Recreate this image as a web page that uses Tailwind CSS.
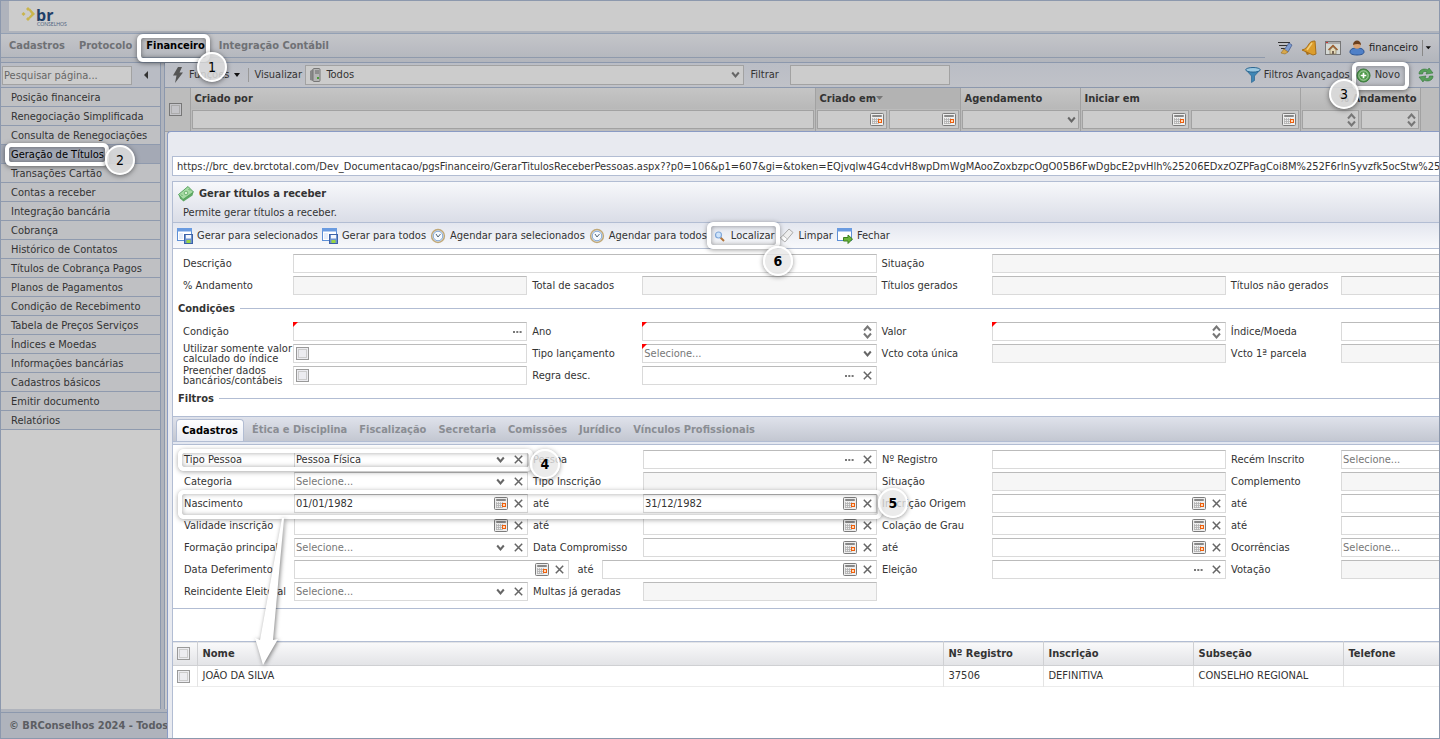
<!DOCTYPE html>
<html lang="pt-BR">
<head>
  <meta charset="UTF-8" />
  <meta name="viewport" content="width=device-width, initial-scale=1.0"/>
  <title>BRConselhos - Gerar títulos a receber</title>
  <script src="https://cdn.jsdelivr.net/npm/@tailwindcss/browser@4"></script>
</head>
<body class="font-['Tahoma','DejaVu_Sans_Condensed','DejaVu_Sans',sans-serif] text-[11px] leading-[14px] text-[#333]">

  <!-- icons -->
  <svg class="hidden">
    <symbol id="i-cal" viewBox="0 0 14 13"><rect x=".5" y=".5" width="13" height="12" rx="1" fill="#eee" stroke="#7c7c7c"/><path d="M2.500 2.500h9v1h-9z" fill="#bbb" stroke="#888"/><path d="M2.500 5v6M4.500 5v6M6.500 5v6M8.500 5v6M2 6.500h8M2 8.500h8M2 10.500h6" stroke="#b0b0b0" stroke-width=".8"/><path d="M8 6h4v4H8z" fill="#ee5f0c"/><path d="M9 7h2v2H9z" fill="#ffd9b8"/></symbol>
    <symbol id="i-x" viewBox="0 0 9 9"><path d="M.8.8l7.400 7.400M8.200.8L.8 8.200" stroke="#666" stroke-width="1.500" fill="none"/></symbol>
    <symbol id="i-v" viewBox="0 0 9 9"><path d="M1.200 2.500l3.300 4 3.300-4" stroke="#666" stroke-width="2" fill="none"/></symbol>
    <symbol id="i-dots" viewBox="0 0 9 9"><path d="M0 4h2v2H0zM3.300 4h2v2h-2zM6.600 4h2v2h-2z" fill="#777"/></symbol>
    <symbol id="i-spin" viewBox="0 0 9 14"><path d="M1 5.500l3.500-4 3.500 4M1 8.500l3.500 4 3.500-4" stroke="#777" stroke-width="2" fill="none"/></symbol>
    <symbol id="i-save" viewBox="0 0 16 16"><rect x=".5" y=".5" width="14" height="12" fill="#fff" stroke="#5d8fd6"/><path d="M0 0h15v3.500H0z" fill="#6a9be0"/><path d="M2 5h4v6H2z" fill="#e6eefb"/><rect x="7.500" y="6.500" width="8" height="9" fill="#6f94cf" stroke="#3c62a8"/><path d="M9 7h5v3.500H9z" fill="#f4f7fd"/><path d="M9.500 12h4v3h-4z" fill="#9bd640"/></symbol>
    <symbol id="i-clock" viewBox="0 0 16 16"><circle cx="8" cy="8" r="6.400" fill="#eaf3fc" stroke="#c0a878" stroke-width="1.500"/><circle cx="8" cy="8" r="4.800" fill="#f6fbff" stroke="#7fa4d4"/><path d="M6 6l2 3 2.500-3" fill="none" stroke="#567" stroke-width="1"/></symbol>
    <symbol id="i-find" viewBox="0 0 16 16"><path d="M9.500 9.500l3.500 3.500" stroke="#b5763c" stroke-width="2"/><circle cx="7.500" cy="7" r="3" fill="#cfe4fb" stroke="#82a9db" stroke-width="1.200"/></symbol>
    <symbol id="i-erase" viewBox="0 0 16 16"><path d="M1.500 10L10 1l4 3.500L6 14z" fill="#eee" stroke="#aaa"/><path d="M1.500 10l2.500-2.700L8.300 11 6 14z" fill="#fff" stroke="#aaa" stroke-width=".7"/></symbol>
    <symbol id="i-exit" viewBox="0 0 16 16"><rect x=".5" y=".5" width="14" height="12" fill="#fff" stroke="#5d8fd6"/><path d="M0 0h15v3.500H0z" fill="#6a9be0"/><path d="M6.500 9.500H11V7l4.500 4-4.500 4.500V13H6.500z" fill="#6bb53c" stroke="#3c8020"/></symbol>
  </svg>

  <div class="relative flex flex-col min-h-screen overflow-hidden bg-[#afb3bc] border border-[#8c98ad]">

    <!-- logo -->
    <header class="flex h-[30px] ml-2 pl-3 bg-[#cccccc]">
      <svg class="w-[60px] h-[30px]" viewBox="0 0 60 30" role="img" aria-label="br Conselhos">
        <g fill="#c9b44c"><path d="M2.500 11l2 2-2 2-2-2z"/><path d="M7 6l2 2-2 2-2-2z"/><path d="M7 16l2 2-2 2-2-2z"/><path d="M7.500 9l1.500-1.500L14 13l-5.200 5-1.500-1.500L10.500 13z"/></g>
        <text x="15" y="20" font-family="Open Sans" font-size="16" font-weight="700" fill="#1f3f68">br</text>
        <text x="16" y="25" font-family="Lato" font-size="5" fill="#4f6480">CONSELHOS</text>
      </svg>
    </header>

    <!-- menu -->
    <nav class="relative flex items-stretch h-[29px] mt-[2px] border-t border-[#93a0b4] bg-linear-to-b from-[#c4c5c9] to-[#b2b5bc] font-bold text-[#6f7175]">
      <div class="flex items-center gap-[14px] grow pl-2 mb-1 border-b border-[#8f9aac] mr-2 text-[11px]">
        <a href="#">Cadastros</a>
        <a href="#">Protocolo</a>
        <a href="#" class="text-black">Financeiro</a>
        <a href="#">Integração Contábil</a>
      </div>
      <div class="flex items-center gap-2 pr-2 pl-1 font-normal text-[#222]">
        <svg class="size-4" viewBox="0 0 16 16"><path d="M1 2.500h12M2 5.500h10M4 8.500h5" stroke="#333" stroke-width="1.200"/><path d="M7 10l5-7 3 2-4 7z" fill="#7c9bd0" stroke="#4a5f90" stroke-width=".8"/><path d="M4 13l3-4 4 3-3 2z" fill="#d8a84c" stroke="#9a6f20" stroke-width=".6"/></svg>
        <svg class="size-4" viewBox="0 0 16 16"><path d="M14 1l1 13-3 1L1 10c4-1 5-3 7-6 1-2 3-3 6-3z" fill="#dc9d2c" stroke="#a8701a"/><path d="M11 3l-5 7" stroke="#f2cf7c" stroke-width="1.500"/><path d="M4 11l5 3-3 1z" fill="#a8701a"/></svg>
        <svg class="size-4" viewBox="0 0 16 16"><rect x=".5" y="1.500" width="15" height="13" fill="#d5d9d5" stroke="#777"/><path d="M1 2h14v2H1z" fill="#aaa"/><path d="M1 2h2v1H1z" fill="#c33"/><path d="M3.500 10L8 5.500l4.500 4.500" fill="none" stroke="#9a5a28" stroke-width="1.500"/><path d="M5 10l3-3 3 3v4H5z" fill="#e4d9b8" stroke="#8a7d5e" stroke-width=".7"/><path d="M7 11h2v3H7z" fill="#765"/></svg>
        <button class="flex items-center gap-1">
          <svg class="size-4" viewBox="0 0 16 16"><path d="M1 12c0-3 3-4 7-4s7 1 7 4c0 2-3 3-7 3s-7-1-7-3z" fill="#4f80c8" stroke="#2c5594"/><circle cx="8" cy="5" r="3.700" fill="#d9a273"/><path d="M4 5c0-6 8-6 8 0-2-1.500-5-1.500-8 0z" fill="#6b3f1d"/></svg>
          <span>financeiro</span>
          <svg class="w-[9px] h-4 border-l border-[#888]" viewBox="0 0 9 16"><path d="M3 6h6l-3 3.500z" fill="#111"/></svg>
        </button>
      </div>
      <div class="absolute left-[136px] top-0 w-[73px] h-[28px] rounded-md border-4 border-white shadow-[0_1px_5px_rgba(0,0,0,.5),inset_0_0_5px_rgba(0,0,0,.45)]"></div>
    </nav>

    <div class="flex grow gap-[3px] border-t border-[#8c98ad]">
      <!-- side menu -->
      <aside class="w-40 shrink-0 border-r border-[#8c98ad] bg-[#cccccc]">
        <div class="flex items-center h-[25px] pl-px border-b border-[#8c98ad] bg-[#b9bcc4]">
          <input aria-label="Pesquisar página" placeholder="Pesquisar página..." class="w-[131px] h-[19px] px-px border border-[#a2a2a2] bg-[#cccccc] placeholder:text-[#666]">
          <button class="px-3" aria-label="Recolher"><svg class="w-1 h-2" viewBox="0 0 4 8"><path d="M4 0v8L0 4z" fill="#333"/></svg></button>
        </div>
        <ul id="menu" class="relative"></ul>
      </aside>

      <!-- list behind the window -->
      <main class="grow min-w-0 border-l border-[#8c98ad] bg-[#cccccc]">
        <div class="relative flex items-center h-[25px] pl-[7px] pr-[5px] border-b border-[#8c98ad] bg-linear-to-b from-[#babdc5] to-[#c0c2c8]">
          <button class="flex items-center gap-[5px]">
            <svg class="w-3 h-4" viewBox="0 0 12 16"><path d="M6 0h4L7.500 5.500H11L3 16l1.500-7.500H1z" fill="#555"/></svg>Funções
            <svg class="w-[6px] h-2" viewBox="0 0 6 8"><path d="M0 2h6L3 6z" fill="#111"/></svg>
          </button>
          <div class="w-px h-[14px] ml-2 mr-[5px] bg-[#999]"></div>
          <label for="vis" class="w-[51px]">Visualizar</label>
          <div class="relative w-[439px] h-[20px]">
            <select id="vis" class="w-full h-full pl-5 appearance-none border border-[#a2a2a2] bg-[#cccccc]"><option>Todos</option></select>
            <svg class="absolute left-1 top-[3px] w-[13px] h-[14px]" viewBox="0 0 13 14"><path d="M1 3l3-2v12l-3-1z" fill="#888"/><rect x="4" y=".5" width="7" height="13" rx="1" fill="#b5b5b5" stroke="#777"/><path d="M6 3h4M6 5h4" stroke="#666"/><path d="M8 9h2v2H8z" fill="#4b9a38"/></svg>
            <svg class="absolute right-1 top-[5px] size-[9px] pointer-events-none"><use href="#i-v"/></svg>
          </div>
          <label for="filtrar" class="w-[40px] ml-[6px]">Filtrar</label>
          <input id="filtrar" class="w-40 h-[20px] px-1 border border-[#a2a2a2] bg-[#cccccc]">
          <div class="flex items-center gap-[6px] ml-auto">
            <button class="flex items-center gap-[3px]">
              <svg class="size-4" viewBox="0 0 16 16"><path d="M1 3l5.500 6v6.500l3-2V9L15 3z" fill="#3f87b5" stroke="#2b6690" stroke-width=".7"/><ellipse cx="8" cy="2.800" rx="7.300" ry="2.300" fill="#9cc8e0" stroke="#2b6690"/></svg>Filtros Avançados
            </button>
            <button class="flex items-center gap-1">
              <svg class="size-[15px]" viewBox="0 0 16 16"><circle cx="8" cy="8" r="7" fill="#4f9a4a" stroke="#37783a"/><circle cx="8" cy="8" r="5" fill="none" stroke="#b7d6b4"/><path d="M8 5v6M5 8h6" stroke="#fff" stroke-width="1.800"/></svg>Novo
            </button>
            <button aria-label="Atualizar" class="ml-3"><svg class="size-4" viewBox="0 0 16 16"><path d="M1 7c0-5 6-6 9-4l1-2 4 5-7 1 1-2C7 4 5 4 4.500 7zM15 9c0 5-6 6-9 4l-1 2-4-5 7-1-1 2c2 1 4 1 4.500-2z" fill="#58a05a" stroke="#34763a" stroke-width=".6"/></svg></button>
          </div>
          <div class="absolute right-[30px] -top-px w-[57px] h-[28px] rounded-md border-4 border-white shadow-[0_1px_5px_rgba(0,0,0,.5),inset_0_0_5px_rgba(0,0,0,.35)]"></div>
        </div>
        <table class="w-full table-fixed border-collapse text-left bg-[#bcbcbc]">
          <colgroup><col class="w-[25px]"><col><col class="w-[145px]"><col class="w-[120px]"><col class="w-[220px]"><col class="w-[120px]"><col class="w-[19px]"></colgroup>
          <tr class="h-[21px] bg-linear-to-b from-[#c5c5c5] to-[#b8b8b8]">
            <th rowspan="2" class="pl-1 bg-[#bcbcbc]"><input type="checkbox" aria-label="Selecionar" class="block size-[13px] appearance-none border border-[#777] bg-[#c4c4c8] outline outline-offset-[-3px] outline-[#ababab]"></th>
            <th class="pl-1 border-l border-[#a2a2a2]">Criado por</th>
            <th class="pl-1 border-l border-[#a2a2a2] bg-[#b3b3b3]">Criado em<svg class="inline w-[7px] h-1 mb-[2px]" viewBox="0 0 7 4"><path d="M0 0h7L3.500 4z" fill="#777"/></svg></th>
            <th class="pl-1 border-l border-[#a2a2a2]">Agendamento</th>
            <th class="pl-1 border-l border-[#a2a2a2]">Iniciar em</th>
            <th class="pr-[3px] border-l border-[#a2a2a2] text-right">% Andamento</th>
            <th rowspan="2" class="border-l border-[#a2a2a2] bg-[#bcbcbc]"></th>
          </tr>
          <tr id="filters" class="h-[22px] border-b border-[#a2a2a2]"></tr>
        </table>
      </main>
    </div>

    <footer class="flex items-center h-[26px] pl-2 mt-[3px] border-t border-[#8c98ad] font-bold text-[#5c5e63]">© BRConselhos 2024 - Todos os direitos reservados</footer>

    <!-- window -->
    <section class="absolute left-[166px] top-[130px] -right-[151px] -bottom-px pl-[4px] pt-6 flex flex-col border-l border-t border-[#8a9bc4] rounded-tl bg-[#e8eaf0]">
      <input aria-label="Endereço" value="https://brc_dev.brctotal.com/Dev_Documentacao/pgsFinanceiro/GerarTitulosReceberPessoas.aspx??p0=106&amp;p1=607&amp;gi=&amp;token=EQjvqlw4G4cdvH8wpDmWgMAooZoxbzpcOgO05B6FwDgbcE2pvHlh%25206EDxzOZPFagCoi8M%252F6rlnSyvzfk5ocStw%253D%253D" class="w-full h-5 shrink-0 px-1 border border-[#b2bdd3] bg-white">
      <div class="grow mt-[5px] border-l border-t border-[#b2bdd3] bg-white">
        <div class="h-[41px] pt-1 pl-[5px] bg-linear-to-b from-[#f7f8fb] to-[#dadde7] border-b border-[#b2bdd3]">
          <h1 class="flex items-center gap-[5px] h-4 font-bold">
            <svg class="size-4" viewBox="0 0 16 16"><path d="M.5 8.500L10 .5 15.500 6l-1 3.500-9 6-3.500-3z" fill="#5fa964"/><path d="M.5 8.500L10 .5 15.500 6 5 13.500z" fill="#a6dba4" stroke="#4c9a55" stroke-width=".8"/><circle cx="8" cy="7" r="1.800" fill="#d9f2d4" stroke="#4f9e55" stroke-width=".7"/><path d="M3 8.500l1.500 1.500M10.500 3L12 4.500" stroke="#5fa964"/></svg>
            Gerar títulos a receber
          </h1>
          <p class="mt-1 pl-[5px]">Permite gerar títulos a receber.</p>
        </div>
        <div class="relative flex items-center gap-1 h-[26px] pl-1 bg-linear-to-b from-[#e3e6ef] to-[#f8f9fb] border-b border-[#b2bdd3]">
          <button class="flex items-center gap-1"><svg class="size-4"><use href="#i-save"/></svg>Gerar para selecionados</button>
          <button class="flex items-center gap-1"><svg class="size-4"><use href="#i-save"/></svg>Gerar para todos</button>
          <button class="flex items-center gap-1"><svg class="size-4"><use href="#i-clock"/></svg>Agendar para selecionados</button>
          <button class="flex items-center gap-1"><svg class="size-4"><use href="#i-clock"/></svg>Agendar para todos</button>
          <button class="relative flex items-center gap-1"><svg class="size-4"><use href="#i-find"/></svg>Localizar
            <span class="absolute -left-1 -top-[6px] -right-[5px] h-[27px] rounded-md border-4 border-white shadow-[0_1px_5px_rgba(0,0,0,.4),inset_0_0_5px_rgba(0,0,0,.4)]"></span>
          </button>
          <button class="flex items-center gap-1"><svg class="size-4"><use href="#i-erase"/></svg>Limpar</button>
          <button class="flex items-center gap-1"><svg class="size-4"><use href="#i-exit"/></svg>Fechar</button>
        </div>

        <div id="geral" class="grid grid-cols-[110px_1fr_110px_1fr_110px_1fr_110px_1fr] gap-y-[3px] pt-[5px] px-[10px]"></div>
        <h2 class="flex items-center gap-[5px] h-[27px] pl-[5px] font-bold after:grow after:h-px after:bg-[#b2bdd3]">Condições</h2>
        <div id="condicoes" class="grid grid-cols-[110px_1fr_110px_1fr_110px_1fr_110px_1fr] gap-y-[3px] px-[10px]"></div>
        <h2 class="flex items-center gap-[5px] h-[27px] pl-[5px] font-bold after:grow after:h-px after:bg-[#b2bdd3]">Filtros</h2>

        <div class="mt-1 border-y border-[#b2bdd3]">
          <div class="flex items-end gap-3 h-[25px] pl-[3px] bg-linear-to-b from-[#dfe2eb] to-[#c3c7d1] border-b border-[#b2bdd3] font-bold text-[#8a8d93]">
            <button class="h-[22px] px-[5px] -mr-1 rounded-t border border-b-0 border-[#b2bdd3] bg-linear-to-b from-white to-[#e8ebf3] text-black">Cadastros</button>
            <button class="h-[22px]">Ética e Disciplina</button>
            <button class="h-[22px]">Fiscalização</button>
            <button class="h-[22px]">Secretaria</button>
            <button class="h-[22px]">Comissões</button>
            <button class="h-[22px]">Jurídico</button>
            <button class="h-[22px]">Vínculos Profissionais</button>
          </div>
          <div class="h-[3px] bg-[#e3e7f0] border-b border-[#b2bdd3]"></div>
          <div id="filtros" class="grid grid-cols-[110px_1fr_110px_1fr_110px_1fr_110px_1fr] gap-y-[3px] pt-[5px] pb-[7px] pl-[11px] pr-[10px]"></div>
        </div>

        <table class="w-full table-fixed mt-[32px] border-collapse text-left">
          <colgroup><col class="w-6"><col><col class="w-[100px]"><col class="w-[150px]"><col class="w-[150px]"><col class="w-[247px]"></colgroup>
          <tr class="h-6 bg-linear-to-b from-[#f9f9fa] to-[#e3e4e7] border-t border-t-[#b2bdd3] border-b border-b-[#cfd0d3]">
            <th class="pl-1"><input type="checkbox" aria-label="Selecionar todos" class="block size-[13px] appearance-none border border-[#999] bg-[#ececf0] outline outline-offset-[-3px] outline-[#ccc]"></th>
            <th class="pl-[5px] border-l border-[#cfd0d3]">Nome</th>
            <th class="pl-[5px] border-l border-[#cfd0d3]">Nº Registro</th>
            <th class="pl-[5px] border-l border-[#cfd0d3]">Inscrição</th>
            <th class="pl-[5px] border-l border-[#cfd0d3]">Subseção</th>
            <th class="pl-[5px] border-l border-[#cfd0d3]">Telefone</th>
          </tr>
          <tr class="h-[21px] border-b border-[#ececec]">
            <td class="pl-1"><input type="checkbox" aria-label="Selecionar João da Silva" class="block size-[13px] appearance-none border border-[#999] bg-[#ececf0] outline outline-offset-[-3px] outline-[#ccc]"></td>
            <td class="pl-[5px] border-l border-[#e4e4e4]">JOÃO DA SILVA</td>
            <td class="pl-[5px] border-l border-[#e4e4e4]">37506</td>
            <td class="pl-[5px] border-l border-[#e4e4e4]">DEFINITIVA</td>
            <td class="pl-[5px] border-l border-[#e4e4e4]">CONSELHO REGIONAL</td>
            <td class="pl-[5px] border-l border-[#e4e4e4]"></td>
          </tr>
        </table>
      </div>

      <!-- frames and arrow over the filters -->
      <div class="absolute left-[10px] top-[317px] w-[355px] h-[22px] rounded-md border-4 border-white shadow-[0_1px_5px_rgba(0,0,0,.35),inset_0_0_5px_rgba(0,0,0,.35)]"></div>
      <div class="absolute left-[10px] top-[358px] w-[704px] h-[29px] rounded-md border-4 border-white shadow-[0_1px_5px_rgba(0,0,0,.35),inset_0_0_5px_rgba(0,0,0,.35)]"></div>
      <svg class="absolute left-[81px] top-[386px] w-10 h-[155px] drop-shadow-[1px_1px_2px_rgba(0,0,0,.5)]" viewBox="0 0 40 155"><path d="M33 0h2L24 122l5-1-15 26L6 120l5 2z" fill="#fff"/></svg>
    </section>

    <!-- step numbers -->
    <div class="absolute left-[196px] top-[51px] size-[30px] grid place-items-center rounded-full border-2 border-white bg-[#dcdcdc]/85 shadow-[0_1px_5px_rgba(0,0,0,.5)] text-[14px] text-black">1</div>
    <div class="absolute left-[104px] top-[144px] size-[30px] grid place-items-center rounded-full border-2 border-white bg-[#dcdcdc]/85 shadow-[0_1px_5px_rgba(0,0,0,.5)] text-[14px] text-black">2</div>
    <div class="absolute right-[80px] top-[78px] size-[30px] grid place-items-center rounded-full border-2 border-white bg-[#dcdcdc]/85 shadow-[0_1px_5px_rgba(0,0,0,.5)] text-[14px] text-black">3</div>
    <div class="absolute left-[529px] top-[448px] size-[30px] grid place-items-center rounded-full border-2 border-white bg-[#e6e6e6]/80 shadow-[0_1px_5px_rgba(0,0,0,.4)] text-[14px] font-bold text-black">4</div>
    <div class="absolute left-[877px] top-[487px] size-[30px] grid place-items-center rounded-full border-2 border-white bg-[#e6e6e6]/80 shadow-[0_1px_5px_rgba(0,0,0,.4)] text-[14px] font-bold text-black">5</div>
    <div class="absolute left-[762px] top-[245px] size-[30px] grid place-items-center rounded-full border-2 border-white bg-[#e6e6e6]/80 shadow-[0_1px_5px_rgba(0,0,0,.4)] text-[14px] font-bold text-black">6</div>
  </div>

  <script>
    const menu = [
      "Posição financeira", "Renegociação Simplificada", "Consulta de Renegociações", "Geração de Títulos",
      "Transações Cartão", "Contas a receber", "Integração bancária", "Cobrança", "Histórico de Contatos",
      "Títulos de Cobrança Pagos", "Planos de Pagamentos", "Condição de Recebimento", "Tabela de Preços Serviços",
      "Índices e Moedas", "Informações bancárias", "Cadastros básicos", "Emitir documento", "Relatórios"
    ];
    document.getElementById("menu").innerHTML = menu.map((m, i) => i === 3
      ? `<li class="relative h-[19px] pl-[10px] pt-[3px] border-b border-[#8f9aae] bg-[#a4a9b5] text-black"><a href="#">${m}</a>
          <span class="absolute left-1 -top-[2px] w-[104px] h-[23px] rounded-md border-4 border-white shadow-[0_1px_5px_rgba(0,0,0,.5),inset_0_0_5px_rgba(0,0,0,.45)]"></span></li>`
      : `<li class="h-[19px] pl-[10px] pt-[3px] border-b border-[#8f9aae] bg-[#bfc0c3]"><a href="#">${m}</a></li>`).join("");

    const icons = {
      cal: '<svg class="w-[14px] h-[13px]"><use href="#i-cal"/></svg>',
      v: '<svg class="size-[9px] mx-[3px] last:mx-0"><use href="#i-v"/></svg>',
      dots: '<svg class="size-[9px] mx-[3px] last:mx-0"><use href="#i-dots"/></svg>',
      x: '<svg class="size-[9px]"><use href="#i-x"/></svg>',
      spin: '<svg class="w-[9px] h-[14px]"><use href="#i-spin"/></svg>'
    };

    // filter row of the list
    const gridBox = icon => `<div class="flex items-center justify-end grow h-[19px] pr-[2px] border border-[#a2a2a2] bg-[#cccccc]">${icon}</div>`;
    document.getElementById("filters").innerHTML = [[""], [icons.cal, icons.cal], [icons.v], [icons.cal, icons.cal], [icons.spin, icons.spin]]
      .map(c => `<td class="px-px border-l border-[#a2a2a2]"><div class="flex gap-[2px]">${c.map(gridBox).join("")}</div></td>`).join("");

    let n = 0;
    // type: text, off, check, select; icons: names separated by space
    function box(id, [label, type, tail = "", value = "", req = false]) {
      const right = tail.split(" ").filter(Boolean).map(t => icons[t]).join("");
      const mark = req ? '<svg class="absolute -left-px -top-px size-[5px]" viewBox="0 0 5 5"><path d="M0 0h5L0 5z" fill="red"/></svg>' : "";
      let control;
      if (type === "check") control = `<input id="${id}" type="checkbox" class="size-[13px] ml-[2px] appearance-none border border-[#999] bg-[#ececf0] outline outline-offset-[-3px] outline-[#ccc]">`;
      else if (type === "select") control = `<select id="${id}" class="absolute inset-0 w-full appearance-none pl-px ${value ? "text-[#333]" : "text-[#777]"}"><option>${value || "Selecione..."}</option></select>`;
      else control = `<input id="${id}" value="${value}" class="absolute inset-0 w-full px-px" ${type === "off" ? "disabled" : ""}>`;
      return `<div class="relative flex items-center grow h-[19px] border border-[#dadada] border-t-[#bbb] ${type === "off" ? "bg-[#f6f6f6]" : "bg-white"}">
        ${control}${mark}<div class="relative flex items-center gap-[6px] ml-auto pr-1 pointer-events-none">${right}</div></div>`;
    }
    function field(f) {
      if (!f) return "<div></div><div></div>";
      const id = "f" + n++;
      if (f[1] === "span3") return `<label for="${id}" class="self-center">${f[0]}</label><div class="flex col-span-3 mr-[5px]">${box(id, [f[0], f[2]])}</div>`;
      if (f[1] === "range") return `<label for="${id}" class="self-center">${f[0]}</label><div class="flex items-center gap-2 col-span-3 mr-[5px]">${box(id, ["", "text", "cal x"])}<label for="${id}b">até</label>${box(id + "b", ["", "text", "cal x"])}</div>`;
      const two = f[0].includes("<br>") ? "leading-[10px]" : "";
      return `<label for="${id}" class="self-center h-[19px] flex items-center whitespace-nowrap ${two}"><span>${f[0]}</span></label><div class="flex mr-[5px]">${box(id, f)}</div>`;
    }
    const fill = (id, list) => document.getElementById(id).innerHTML = list.map(field).join("");

    fill("geral", [
      ["Descrição", "span3", "text"], ["Situação", "span3", "off"],
      ["% Andamento", "off"], ["Total de sacados", "off"], ["Títulos gerados", "off"], ["Títulos não gerados", "off"]
    ]);
    fill("condicoes", [
      ["Condição", "text", "dots", "", true], ["Ano", "text", "spin", "", true], ["Valor", "text", "spin", "", true], ["Índice/Moeda", "text"],
      ["Utilizar somente valor<br>calculado do índice", "check"], ["Tipo lançamento", "select", "v", "", true], ["Vcto cota única", "off"], ["Vcto 1ª parcela", "off"],
      ["Preencher dados<br>bancários/contábeis", "check"], ["Regra desc.", "text", "dots x"], null, null
    ]);
    fill("filtros", [
      ["Tipo Pessoa", "select", "v x", "Pessoa Física"], ["Pessoa", "text", "dots x"], ["Nº Registro", "text"], ["Recém Inscrito", "select", "v x"],
      ["Categoria", "select", "v x"], ["Tipo Inscrição", "off"], ["Situação", "off"], ["Complemento", "off"],
      ["Nascimento", "text", "cal x", "01/01/1982"], ["até", "text", "cal x", "31/12/1982"], ["Inscrição Origem", "text", "cal x"], ["até", "text", "cal x"],
      ["Validade inscrição", "text", "cal x"], ["até", "text", "cal x"], ["Colação de Grau", "text", "cal x"], ["até", "text", "cal x"],
      ["Formação principal", "select", "v x"], ["Data Compromisso", "text", "cal x"], ["até", "text", "cal x"], ["Ocorrências", "select", "v x"],
      ["Data Deferimento", "range"], ["Eleição", "text", "dots x"], ["Votação", "off"],
      ["Reincidente Eleitoral", "select", "v x"], ["Multas já geradas", "off"], null, null
    ]);
  </script>
</body>
</html>
